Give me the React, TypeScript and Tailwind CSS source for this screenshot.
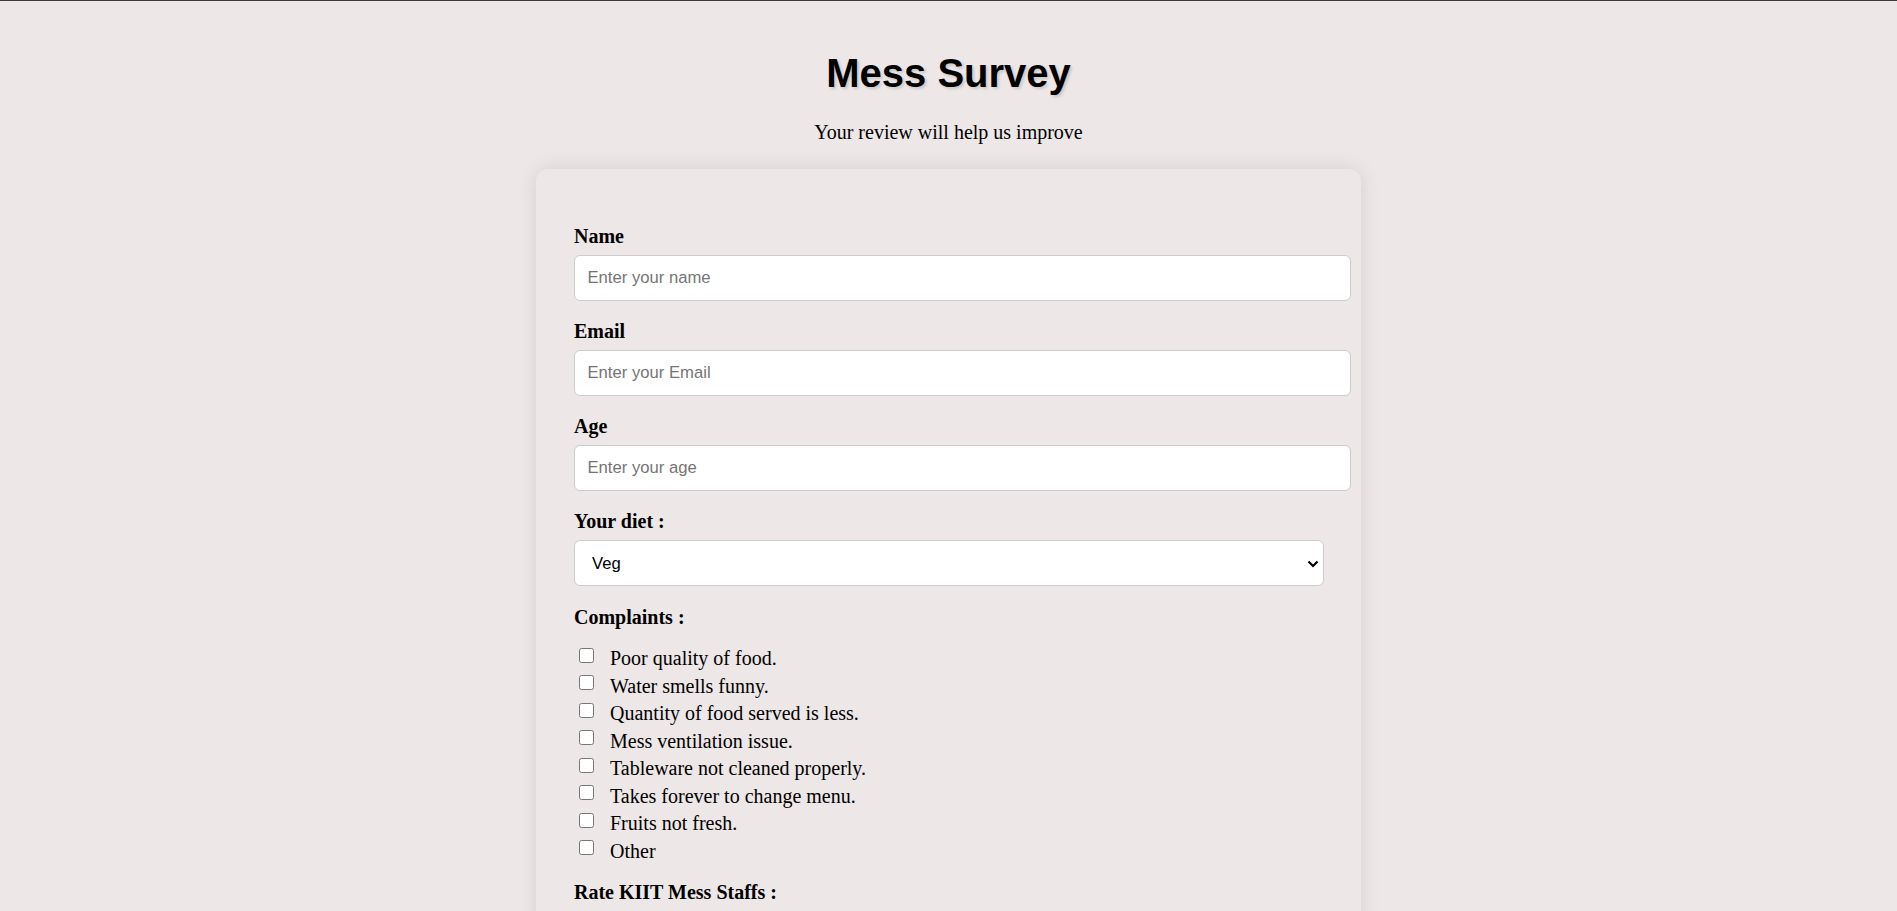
import React from "react";

const complaints = [
  "Poor quality of food.",
  "Water smells funny.",
  "Quantity of food served is less.",
  "Mess ventilation issue.",
  "Tableware not cleaned properly.",
  "Takes forever to change menu.",
  "Fruits not fresh.",
  "Other",
];

const serif = "font-['Liberation_Serif','Times_New_Roman',serif]";
const sans = "font-['Liberation_Sans',Arial,sans-serif]";

function Field({ label, placeholder }: { label: string; placeholder: string }) {
  return (
    <div className="mb-[19px]">
      <label className={`block ${serif} font-bold text-[20px] leading-[23px] text-black mb-[7px]`}>{label}</label>
      <input
        type="text"
        placeholder={placeholder}
        className={`block w-[777px] h-[46px] bg-white border border-[#cccccc] rounded-[6px] px-[12.5px] ${sans} text-[16.67px] text-black placeholder:text-[#757575] outline-none`}
      />
    </div>
  );
}

export default function App() {
  return (
    <div className="min-h-screen bg-[#ede7e7] text-black">
      <div className="h-px bg-[#3b3b3b]" />
      <h1
        className={`mt-[49px] text-center ${sans} font-bold text-[40px] leading-[46px] [text-shadow:2px_2px_3px_rgba(0,0,0,0.14)]`}
      >
        Mess Survey
      </h1>
      <p className={`mt-[24.7px] text-center ${serif} text-[20px] leading-[23px]`}>
        Your review will help us improve
      </p>
      <div className="mt-[25.3px] mx-auto w-[825px] rounded-[12px] bg-[#ede7e7] shadow-[0_0_20px_rgba(0,0,0,0.1)] pt-[56.5px] pl-[38px] pr-[37px] pb-[60px] mb-[40px]">
        <Field label="Name" placeholder="Enter your name" />
        <Field label="Email" placeholder="Enter your Email" />
        <Field label="Age" placeholder="Enter your age" />

        <div className="mb-[20px]">
          <label className={`block ${serif} font-bold text-[20px] leading-[23px] mb-[7px]`}>Your diet :</label>
          <div className="relative w-[750px] h-[46px]">
            <select
              className={`appearance-none w-full h-full bg-white border border-[#cccccc] rounded-[6px] pl-[17px] pr-[30px] ${sans} text-[16.67px] text-black outline-none`}
              defaultValue="Veg"
            >
              <option>Veg</option>
              <option>Non-Veg</option>
            </select>
            <svg
              className="absolute right-[5px] top-[19.5px] pointer-events-none"
              width="12"
              height="8"
              viewBox="0 0 12 8"
            >
              <path d="M1.5 1.5 L6 6 L10.5 1.5" fill="none" stroke="#000" strokeWidth="2.2" />
            </svg>
          </div>
        </div>

        <div className={`${serif} font-bold text-[20px] leading-[23px] mb-[18px]`}>Complaints :</div>
        <div>
          {complaints.map((c) => (
            <div key={c} className="flex items-start h-[27.5px]">
              <input type="checkbox" className="ml-[5px] mt-[0.5px] w-[15px] h-[15px] shrink-0" />
              <span className={`ml-[16px] ${serif} text-[20px] leading-[23px]`}>{c}</span>
            </div>
          ))}
        </div>

        <div className={`mt-[14px] ${serif} font-bold text-[20px] leading-[23px] mb-[18px]`}>Rate KIIT Mess Staffs :</div>
        <div className="flex flex-col gap-[6px]">
          {["Excellent", "Good", "Average", "Poor"].map((r) => (
            <div key={r} className="flex items-start h-[27.5px]">
              <input type="radio" name="rate" className="ml-[5px] mt-[0.5px] w-[15px] h-[15px] shrink-0" />
              <span className={`ml-[16px] ${serif} text-[20px] leading-[23px]`}>{r}</span>
            </div>
          ))}
        </div>
      </div>
    </div>
  );
}
